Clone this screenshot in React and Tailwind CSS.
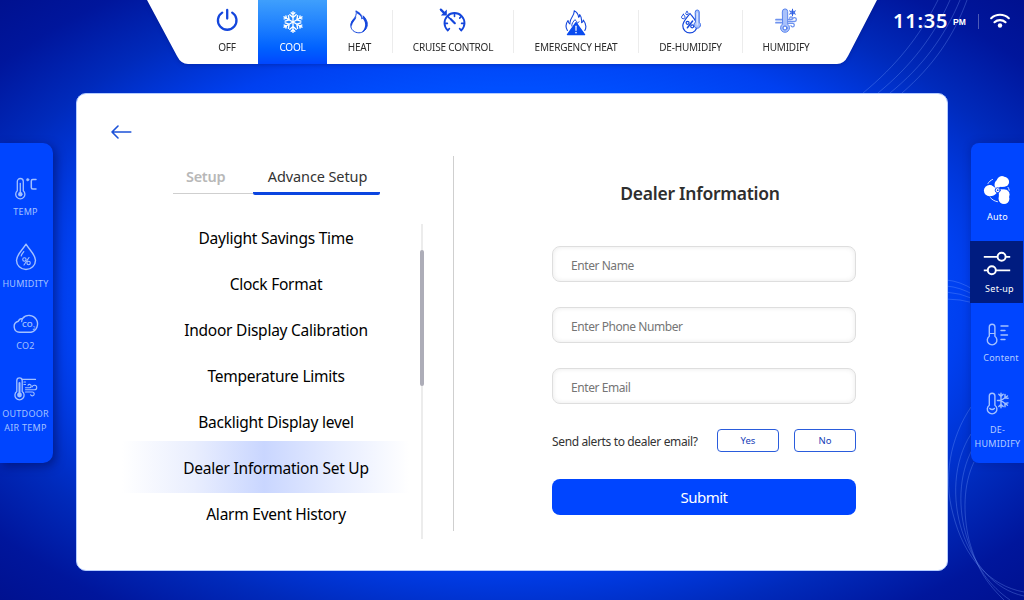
import React from "react";

const BLUE = "#1446dc";

function Icon({ w, h, children, className = "" }) {
  return (
    <svg width={w} height={h} viewBox={`0 0 ${w} ${h}`} fill="none" strokeLinecap="round" strokeLinejoin="round" className={`block shrink-0 ${className}`}>
      {children}
    </svg>
  );
}

const PowerIcon = () => (
  <Icon w={24} h={26} className="text-[#1446dc]">
    <path d="M7.2 4.6A9.3 9.3 0 1 0 17.2 4.6" stroke="currentColor" strokeWidth="2.3" />
    <path d="M12.2 2V10.500" stroke="currentColor" strokeWidth="2.3" />
  </Icon>
);

const SnowIcon = () => (
  <Icon w={24} h={26}>
    {[0, 60, 120, 180, 240, 300].map((a) => (
      <path key={a} transform={`rotate(${a} 12 13)`} d="M12 13V2.6M12 8.6L8.8 5.8M12 8.6l3.2-2.8M12 5.4L10.2 3.8M12 5.4l1.8-1.6" stroke="#fff" strokeWidth="1.35" />
    ))}
  </Icon>
);

const FlameIcon = () => (
  <Icon w={24} h={26}>
    <path d="M9.2 2.2c4.6 1.6 5.8 4.6 5.6 7.8 1.6-.9 1.5-2.3 1.3-3.2 3 3 4.8 6.500 4 10.200-.9 4.200-4.400 6.800-8.200 6.800-4.600 0-8.200-3.200-8.200-7.600 0-5 6.900-7.400 5.500-14z" stroke={BLUE} strokeWidth="1" />
    <path d="M9.2 2.2c4.600 1.600 5.800 4.600 5.600 7.800-.8-2.800-2.400-4.600-4.400-5.200zM16.100 6.800c3 3 4.800 6.500 4 10.200-.7 3.200-2.800 5.300-5.400 6.200 3.500-3.400 5-8.400 1.400-13.200zM9.400 7.500c-.6 4-4.600 5.600-4.400 10.500-2-3.500-.8-6 1.400-8z" fill={BLUE} />
  </Icon>
);

const CruiseIcon = () => (
  <Icon w={28} h={26}>
    <path d="M8.700 22.400A10 10 0 1 1 22.300 22.400" stroke={BLUE} strokeWidth="1.900" />
    <path d="M15.500 5.400v3M8.700 8.200l1.700 1.900M22.400 8.200l-1.700 1.900M5.800 15.400h2.600M25.200 15.400h-2.600M8.700 22.400l1.700-1.800M22.300 22.400l-1.700-1.800" stroke={BLUE} strokeWidth="1.600" />
    <path d="M11.600 11l4.200 4.200" stroke={BLUE} strokeWidth="2.200" />
    <path d="M1.800 1.600l4 4" stroke={BLUE} strokeWidth="2.200" />
    <path d="M7.800 1.600v6H1.800z" fill={BLUE} />
  </Icon>
);

const EmergencyIcon = () => (
  <Icon w={24} h={28}>
    <path d="M3.400 21.500C.4 16.500 2.500 13.500 4 11.500c.3 2 .9 3 2 3.500-1-5.800 4.600-7.400 4.200-13.300 3 1.400 4.200 4.300 4.400 6.600.9-.5 1.100-1.600 1.100-2.800 2.200 2.600 2.100 6 1.900 8.300 1.100-.4 1.700-1.400 1.700-2.800 2.300 3 3.500 7 1.500 10.500" stroke={BLUE} strokeWidth="1.100" />
    <path d="M7.800 17c-.3-3 1.700-4.300 3.100-6.400 1.400 1.300 2.200 2.300 2.300 3.700.8-.3 1.400-.8 1.800-1.600" stroke={BLUE} strokeWidth="1" />
    <path d="M12 13.800L20.500 25.600H3.500z" fill="#0a4bef" stroke="#0a4bef" strokeWidth="1.500" />
    <path d="M12 17.300v4" stroke="#dfe8ff" strokeWidth="1.400" />
    <circle cx="12" cy="23.600" r=".9" fill="#dfe8ff" />
  </Icon>
);

const DehumidifyIcon = () => (
  <Icon w={22} h={28}>
    <path d="M10 5.500c3.200 4.200 7 7.700 7 12.300a7 7 0 0 1-14.200 0C2.800 13.200 7 9.700 10 5.500z" stroke={BLUE} strokeWidth="1.200" />
    <path d="M12.600 13L7.400 19.800" stroke={BLUE} strokeWidth="1.500" />
    <circle cx="7.600" cy="14.800" r="1.500" stroke={BLUE} strokeWidth="1.200" />
    <circle cx="12.200" cy="18.300" r="1.500" stroke={BLUE} strokeWidth="1.200" />
    <path d="M15.200 4a2 2 0 0 1 4 0v10.300a3.300 3.300 0 1 1-4 0z" fill="#a9c1fa" stroke="#3f6fe8" />
    <path d="M17.200 5v12" stroke="#e7eeff" />
    <path d="M3.400 6.300c1.100 1.500 1.600 2.100 1.600 3.100a1.800 1.800 0 0 1-3.500 0c0-1 .8-1.600 1.900-3.100zM7 3.500c.8 1.100 1.200 1.500 1.200 2.200a1.300 1.300 0 0 1-2.500 0c0-.7.6-1.100 1.300-2.200z" stroke={BLUE} />
  </Icon>
);

const MiniSnow = ({ x, y, r, color, sw = 1 }) => (
  <g transform={`translate(${x} ${y})`}>
    {[0, 60, 120].map((a) => (
      <path key={a} transform={`rotate(${a})`} d={`M0 ${-r}V${r}`} stroke={color} strokeWidth={sw} />
    ))}
    <circle r={r * 0.55} stroke={color} strokeWidth={sw * 0.7} />
  </g>
);

const HumidifyIcon = () => (
  <Icon w={24} h={26}>
    <path d="M2 11.700h6M2 14.700h6" stroke="#6f93ef" strokeWidth="1.800" />
    <path d="M8.300 3.600a2.700 2.700 0 0 1 5.400 0v12.600a4.500 4.500 0 1 1-5.400 0z" fill="#a9c1fa" stroke="#5b85ee" strokeWidth="1" />
    <circle cx="11" cy="20" r="2" fill="#fff" stroke="#3f6fe8" />
    <path d="M14.500 11.500h2.500a1.300 1.300 0 1 0-1.300-1.500M14.500 13.500h6a1.900 1.900 0 1 0-1.900-2.300M14.500 15.400h4.100a1.700 1.700 0 1 1-1.600 2.200" stroke="#6f93ef" strokeWidth="1.300" />
    <MiniSnow x={18.500} y={4.500} r={3.300} color="#2f60e4" />
  </Icon>
);

const SIDE = "#a3c1ff";

const TempIcon = () => (
  <Icon w={22} h={24}>
    <g transform="translate(-2.200 .5)">
      <path d="M4.500 5a3 3 0 0 1 6 0v9.200a4.600 4.600 0 1 1-6 0z" stroke={SIDE} strokeWidth="1.300" />
      <path d="M7.500 7v10" stroke={SIDE} strokeWidth="1.300" />
      <circle cx="7.500" cy="17.700" r="2.200" fill={SIDE} />
    </g>
    <circle cx="12.700" cy="3.700" r="1.200" fill={SIDE} stroke={SIDE} strokeWidth=".6" />
    <path d="M21 3.500h-3.200q-1.500 0-1.500 1.500v6.500q0 1.500 1.500 1.500H21" stroke={SIDE} strokeWidth="1.500" />
  </Icon>
);

const DropIcon = () => (
  <Icon w={22} h={28}>
    <path d="M11 1.200c3.500 5.800 9.500 10.600 9.500 16a9.500 9.300 0 0 1-19 0C1.500 11.800 7.500 7 11 1.200z" stroke={SIDE} strokeWidth="1.400" />
    <path d="M6.200 13c.5-1.700 1.500-3.100 2.600-4.300" stroke={SIDE} strokeWidth="1.200" />
    <path d="M14 14.500L9 22" stroke={SIDE} strokeWidth="1.100" />
    <circle cx="9.400" cy="16.500" r="1.700" stroke={SIDE} strokeWidth="1.100" />
    <circle cx="13.600" cy="20" r="1.700" stroke={SIDE} strokeWidth="1.100" />
  </Icon>
);

const CloudIcon = () => (
  <Icon w={28} h={20}>
    <path d="M7.500 18.200a5.600 5.600 0 0 1-1.200-11A4.600 4.600 0 0 1 10.500 4.500 8.500 8.500 0 1 1 19 18.200z" stroke={SIDE} strokeWidth="1.400" />
    <path d="M10.500 4.600a7 7 0 0 0-.8 3" stroke={SIDE} strokeWidth="1.200" />
    <text x="10" y="13.400" fontSize="7.500" fontWeight="600" fontFamily="Noto Sans, sans-serif" fill={SIDE}>CO</text>
    <text x="20.500" y="15.600" fontSize="5" fontFamily="Noto Sans, sans-serif" fill={SIDE}>2</text>
  </Icon>
);

const OutdoorIcon = () => (
  <Icon w={26} h={26}>
    <path d="M3.800 4.500a2.700 2.700 0 0 1 5.400 0v11a4.600 4.600 0 1 1-5.400 0z" stroke={SIDE} strokeWidth="1.300" />
    <path d="M6.500 7v12" stroke={SIDE} strokeWidth="2" />
    <circle cx="6.500" cy="19" r="2.400" fill={SIDE} />
    <path d="M9 3.400h13.500M11 6h1.500M11 8.500h1.500" stroke={SIDE} strokeWidth="1.200" />
    <path d="M12.500 11.800h4a1.700 1.700 0 1 0-1.500-2.500M12.500 13.800h9a2.300 2.300 0 1 0-2.300-2.800M12.500 16h6.800a1.900 1.900 0 1 1-1.700 2.700" stroke={SIDE} strokeWidth="1.100" />
  </Icon>
);

const FanIcon = () => (
  <Icon w={28} h={30}>
    <g fill="#fff">
      <circle cx="19" cy="6.500" r="5.400" />
      <circle cx="21.300" cy="6.900" r="4.800" />
      <path d="M13.700 5.300C10.500 8 11 12.500 14.500 15c1-2.500 2.500-3.600 5-3.700z" />
      <circle cx="6.500" cy="15.600" r="5.600" />
      <path d="M6 10c3.500-.3 5.200 3.300 8.700 3.500l-.2 2.500c-.6 2.800-3.500 5.400-8 5.200z" />
      <circle cx="21" cy="23.700" r="5.400" />
      <circle cx="21.700" cy="19.500" r="4.900" />
      <path d="M14.500 15c2.500-1.200 6-1 8.500.3l-6.500 10.200c-1.800-3.500.8-6.500-2-10.500z" />
    </g>
    <circle cx="14.700" cy="15.200" r="2.500" fill="#fff" stroke="#0a45f5" strokeWidth="1" />
    <circle cx="14.700" cy="15.200" r=".9" fill="#0a45f5" />
    <path d="M5 8.500C6.200 6.500 7.500 5.400 9.500 4.500M7.500 22.800c2 2.200 4.200 3.400 7 3.900M25 12.300c.7 1 1 1.700 1.200 3" stroke="#dce7ff" strokeWidth="1" />
  </Icon>
);

const SlidersIcon = () => (
  <Icon w={28} h={26}>
    <path d="M.8 6.800h26.400M.8 20.300h26.400" stroke="#fff" strokeWidth="1.800" strokeLinecap="butt" />
    <circle cx="18.600" cy="6.800" r="4" fill="#001c80" stroke="#fff" strokeWidth="1.900" />
    <circle cx="8.800" cy="20.300" r="4" fill="#001c80" stroke="#fff" strokeWidth="1.900" />
  </Icon>
);

const ContentIcon = () => (
  <Icon w={24} h={24}>
    <path d="M3.300 5a2.800 2.800 0 0 1 5.600 0v9.200a4.800 4.800 0 1 1-5.600 0z" stroke={SIDE} strokeWidth="1.400" />
    <path d="M3.500 11.500H8.700" stroke={SIDE} strokeWidth="1" />
    <path d="M15 4h7M15 8.500h4M15 13h6.500M15 17.500h4" stroke={SIDE} strokeWidth="1.400" />
  </Icon>
);

const ThermoSnowIcon = () => (
  <Icon w={24} h={24}>
    <path d="M3.300 5a2.800 2.800 0 0 1 5.600 0v9.200a4.800 4.800 0 1 1-5.600 0z" stroke={SIDE} strokeWidth="1.400" />
    <path d="M3.800 17.500q2.300 2 4.600 0" stroke={SIDE} strokeWidth="1.500" />
    <path d="M15 2.200v14.500M11.500 9.500H15L21.500 5M15 9.500l6.500 4.700M12.800 3.300l2.200 2.200 2.200-2.200M12.800 15.600l2.200-2.200 2.200 2.200M19 3.500v3.200l3 .6M19 15.700v-3.200l3-.6" stroke={SIDE} strokeWidth="1.400" />
  </Icon>
);

const WifiIcon = () => (
  <Icon w={22} h={18}>
    <path d="M2.200 6.200a13 13 0 0 1 17.600 0" stroke="#fff" strokeWidth="2.200" />
    <path d="M5.500 10.200a8.200 8.200 0 0 1 11 0" stroke="#fff" strokeWidth="2.200" />
    <circle cx="11" cy="13.500" r="2.200" fill="#fff" />
  </Icon>
);

const modes = [
  { label: "OFF", icon: PowerIcon, cls: "w-[62px]", ic: "pt-[8px]" },
  { label: "COOL", icon: SnowIcon, cls: "w-[69px] bg-linear-to-b from-[#3f9ffc] to-[#0046ff] text-white", ic: "pt-[9px]" },
  { label: "HEAT", icon: FlameIcon, cls: "w-[66px]", ic: "pt-[9px] pr-[1px]", line: true },
  { label: "CRUISE CONTROL", icon: CruiseIcon, cls: "w-[121px]", ic: "pt-[8px]", line: true },
  { label: "EMERGENCY HEAT", icon: EmergencyIcon, cls: "w-[125px]", ic: "pt-[9px]", line: true },
  { label: "DE-HUMIDIFY", icon: DehumidifyIcon, cls: "w-[104px]", ic: "pt-[8px]", line: true },
  { label: "HUMIDIFY", icon: HumidifyIcon, cls: "w-[86px]", ic: "pt-[8px]" },
];

const menu = [
  "Daylight Savings Time",
  "Clock Format",
  "Indoor Display Calibration",
  "Temperature Limits",
  "Backlight Display level",
  "Dealer Information Set Up",
  "Alarm Event History",
];

function SideItem({ icon: I, children, cls, gap, text = "" }) {
  return (
    <div className={`flex flex-col items-center ${cls}`}>
      <I />
      <span className={`text-center leading-[14px] tracking-[0.25px] whitespace-nowrap ${gap} ${text}`}>{children}</span>
    </div>
  );
}

function Arcs() {
  return (
    <svg className="pointer-events-none absolute inset-0" width="1024" height="600" fill="none" stroke="#7fa6ff" strokeOpacity=".38" strokeWidth=".8">
      <path d="M938 0C920 36 896 66 863 93M950 0C934 36 911 66 878 93M960 0C945 36 923 66 890 93M967 0C954 36 933 66 902 93" />
      <path d="M946 280q14 1 28 10M946 286q14 1 28 9M946 292q14 1 28 7M946 299q14 0 28 4" />
      <path d="M971 407C950 438 943 478 953 514C964 558 990 586 1024 592" />
      <path d="M971 434C953 462 952 500 962 531C972 562 994 590 1024 596" />
      <path d="M973 448C958 475 958 510 967 538C976 568 990 586 1010 600" />
      <path d="M974 462C963 485 963 514 969 540C978 572 988 584 1004 600" />
    </svg>
  );
}

function Field({ placeholder }) {
  return (
    <input
      placeholder={placeholder}
      className="h-9 w-full rounded-[8px] border border-[#dedede] bg-white px-[18px] pt-[2px] text-[12px] tracking-[-0.43px] shadow-[inset_0_0_5px_rgba(0,0,0,0.09)] outline-none placeholder:text-[#757575]"
    />
  );
}

export default function App() {
  return (
    <div className="relative flex h-[600px] w-[1024px] flex-col overflow-hidden bg-[radial-gradient(ellipse_724px_424px_at_50%_50%,#004fff_50%,#0040f0_62%,#002abb_77%,#00169c_90%,#001190_100%)] font-['Noto_Sans',sans-serif]">
      <Arcs />
      <header className="relative flex h-16">
        <div className="ml-[147px] drop-shadow-[0_1px_2px_rgba(0,20,120,0.4)]">
          <nav className="flex h-16 w-[730px] bg-white pl-[49px] text-[10px] text-[#2b2b2b] [clip-path:path('M0_0L30_56Q34_64_41_64H690Q697_64_701_56L730_0Z')]">
            {modes.map(({ label, icon: I, cls, ic, line }) => (
              <div key={label} className={`flex ${cls}`}>
                <div className="flex flex-1 flex-col items-center">
                  <div className={`h-[40px] ${ic}`}>
                    <I />
                  </div>
                  <span className="leading-[14px] tracking-[-0.2px] whitespace-nowrap">{label}</span>
                </div>
                {line && <div className="mt-[10px] h-[43px] w-px bg-[#ececec]" />}
              </div>
            ))}
          </nav>
        </div>
        <div className="ml-[16px] flex h-[42px] items-center text-white">
          <span className="w-[60px] text-[20px] leading-none font-semibold tracking-[0.8px]">11:35</span>
          <span className="mt-[3px] w-[25px] font-['Liberation_Sans',sans-serif] text-[8.500px] font-bold">PM</span>
          <div className="mr-[10px] h-[15px] w-px bg-white/30" />
          <WifiIcon />
        </div>
      </header>

      <div className="relative flex items-start">
        <aside className="mt-[79px] flex h-[320px] w-[53px] flex-col items-center rounded-r-[10px] bg-[#0045ff] pr-[2px] text-[9px] text-[#a3c1ff] shadow-[3px_3px_10px_rgba(0,10,80,0.5)]">
          <SideItem icon={TempIcon} cls="mt-[33px]" gap="mt-[5px]">TEMP</SideItem>
          <SideItem icon={DropIcon} cls="mt-[24px]" gap="mt-[6px]">HUMIDITY</SideItem>
          <SideItem icon={CloudIcon} cls="mt-[23px]" gap="mt-[5px]">CO2</SideItem>
          <SideItem icon={OutdoorIcon} cls="mt-[23px]" gap="mt-[5px]">OUTDOOR<br />AIR TEMP</SideItem>
        </aside>

        <main className="mt-[29px] ml-[23px] flex h-[478px] w-[872px] rounded-[10px] border border-[#b4ccff] bg-white">
          <section className="w-[376px]">
            <svg width="22" height="16" viewBox="0 0 22 16" fill="none" stroke="#1c52d8" strokeWidth="1.600" strokeLinecap="round" strokeLinejoin="round" className="mt-[30px] ml-[34px] block">
              <path d="M7 2L1 8l6 6M1 8h18.800" />
            </svg>
            <div className="mt-[26px] ml-[96px] flex text-[14.500px] tracking-[-0.1px]">
              <div className="flex h-[28px] w-[80px] flex-col border-b border-[#cfcfcf] pl-[13px] leading-[21px] font-semibold tracking-[-0.3px] text-[#b8b8b8]">Setup</div>
              <div className="h-[29px] w-[127px] rounded-b-[2px] border-b-[3px] border-[#0b45e0] pl-[2px] text-center leading-[21px] text-[#333]">Advance Setup</div>
            </div>
            <div className="mt-[29px] ml-[45px] flex">
              <ul className="h-[315px] w-[290px] overflow-hidden text-[15.500px] leading-[24px] tracking-[-0.24px] text-black">
                {menu.map((m, i) => (
                  <li
                    key={m}
                    className={
                      i === 5
                        ? "-my-[3px] flex h-[52px] items-center justify-center bg-[linear-gradient(90deg,rgba(201,214,255,0)_0%,#e9eefe_25%,#c9d6ff_49%,#e6ecff_74%,rgba(201,214,255,0)_99%)] pt-[2px] pl-[18px]"
                        : i === 0
                          ? "flex h-[36px] items-start justify-center pt-[2px] pl-[18px]"
                          : "flex h-[46px] items-center justify-center pt-[2px] pl-[18px]"
                    }
                  >
                    {m}
                  </li>
                ))}
              </ul>
              <div className="ml-[8px] flex h-[315px] w-1 justify-center">
                <div className="flex w-0.5 justify-center bg-[#ececec]">
                  <div className="mt-[26px] h-[136px] w-1 shrink-0 rounded-full bg-[#adadb8]" />
                </div>
              </div>
            </div>
          </section>

          <div className="mt-[62px] h-[375px] w-px bg-[#cfcfcf]" />

          <form className="mt-[87px] ml-[98px] w-[304px]" onSubmit={(e) => e.preventDefault()}>
            <h1 className="mb-[41px] -ml-[8px] text-center text-[17.500px] leading-[24px] font-semibold tracking-[-0.26px] text-[#2e2e2e]">Dealer Information</h1>
            <div className="flex flex-col gap-[25px]">
              <Field placeholder="Enter Name" />
              <Field placeholder="Enter Phone Number" />
              <Field placeholder="Enter Email" />
            </div>
            <div className="mt-[25px] flex h-[23px] items-center text-[12px] text-[#333]">
              <span className="w-[165px] pt-[2px] tracking-[-0.36px] whitespace-nowrap">Send alerts to dealer email?</span>
              <button className="h-[23px] w-[62px] rounded-[4px] border border-[#2a5cdc] pt-px text-[9.500px] text-[#1540b8]">Yes</button>
              <button className="ml-[15px] h-[23px] w-[62px] rounded-[4px] border border-[#2a5cdc] pt-px text-[9.500px] text-[#1540b8]">No</button>
            </div>
            <button className="mt-[27px] h-9 w-full rounded-[8px] bg-[#0045ff] text-[15px] tracking-[-0.5px] text-white">Submit</button>
          </form>
        </main>

        <aside className="mt-[79px] ml-[23px] flex h-[320px] w-[53px] flex-col rounded-l-[8px] bg-[#0045ff] text-[9px] text-[#b4ccff] shadow-[0_0_8px_rgba(0,10,80,0.25)]">
          <SideItem icon={FanIcon} cls="mt-[32px] pr-[2px]" gap="mt-[5px]" text="pl-[2px] text-white">Auto</SideItem>
          <div className="mt-[17px] -ml-px h-[62px] w-[53px] bg-[#001c80]">
            <SideItem icon={SlidersIcon} cls="pt-[9px]" gap="mt-[6px]" text="pl-[6px] text-white">Set-up</SideItem>
          </div>
          <SideItem icon={ContentIcon} cls="mt-[19px]" gap="mt-[5px]" text="pl-[7px]">Content</SideItem>
          <SideItem icon={ThermoSnowIcon} cls="mt-[26px]" gap="mt-[8px]">DE-<br />HUMIDIFY</SideItem>
        </aside>
      </div>
    </div>
  );
}
